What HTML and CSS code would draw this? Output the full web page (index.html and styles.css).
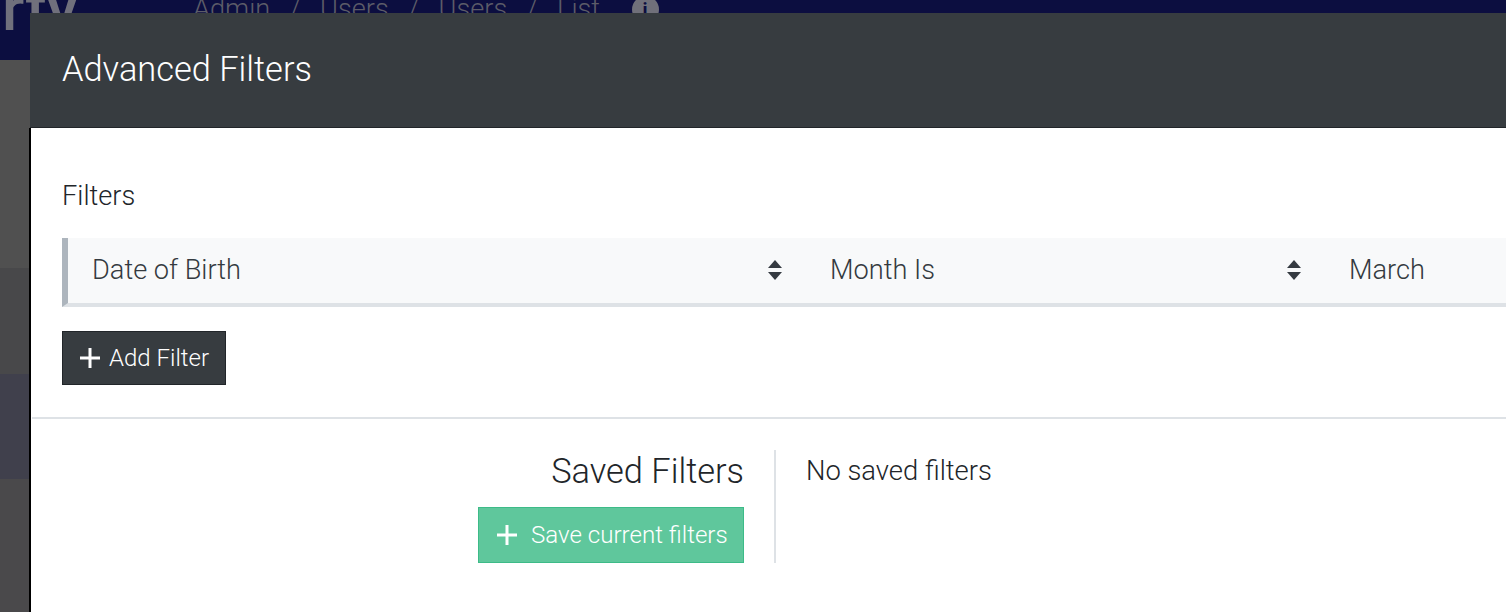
FILE: index.html
```html
<!DOCTYPE html>
<html lang="en">
<head>
<meta charset="utf-8">
<title>Advanced Filters</title>
<link rel="stylesheet" href="styles.css">
</head>
<body>
<div class="backdrop">
  <header class="topbar">
    <span class="logo">rty</span>
    <nav class="crumbs">
      <span>Admin</span><span>/</span><span>Users</span><span>/</span><span>Users</span><span>/</span><span>List</span>
      <span class="info">i</span>
    </nav>
  </header>
  <aside class="rail">
    <div class="rail-a"></div>
    <div class="rail-b"></div>
    <div class="rail-c"></div>
    <div class="rail-d"></div>
  </aside>
</div>
<section class="modal">
  <header class="modal-head"><h1 class="modal-title">Advanced Filters</h1></header>
  <div class="modal-main">
    <div class="modal-body">
      <h2 class="filters-label">Filters</h2>
      <div class="filter-row">
        <div class="cell cell-field"><span>Date of Birth</span>
          <svg class="sort" viewBox="0 0 16 22"><path d="M8 1 15 9H1zM8 21 1 13h14z"/></svg>
        </div>
        <div class="cell cell-op"><span>Month Is</span>
          <svg class="sort" viewBox="0 0 16 22"><path d="M8 1 15 9H1zM8 21 1 13h14z"/></svg>
        </div>
        <div class="cell cell-val"><span>March</span></div>
      </div>
      <button class="btn btn-dark">
        <svg class="plus" viewBox="0 0 20 20"><path d="M10 0v20M0 10h20"/></svg>
        Add Filter
      </button>
    </div>
    <div class="saved">
      <div class="saved-left">
        <h2 class="saved-title">Saved Filters</h2>
        <button class="btn btn-green">
          <svg class="plus" viewBox="0 0 20 20"><path d="M10 0v20M0 10h20"/></svg>
          Save current filters
        </button>
      </div>
      <div class="saved-right">No saved filters</div>
    </div>
  </div>
</section>
</body>
</html>
```
FILE: styles.css
```css
* { box-sizing: border-box; }
html, body { margin: 0; height: 612px; overflow: hidden; }
body {
  position: relative;
  width: 1506px;
  background: #4a4a4c;
  font-family: Roboto, "Liberation Sans", sans-serif;
  font-weight: 300;
  color: #212529;
}
.backdrop { display: flex; flex-direction: column; height: 612px; overflow: hidden; }
.topbar {
  position: relative;
  flex: 0 0 60px;
  background: #0c0e40;
  color: #5c5c68;
  overflow: hidden;
}
.logo {
  position: absolute;
  left: 2px;
  top: -23px;
  font-size: 63px;
  line-height: 63px;
  font-weight: 500;
  color: #70707c;
}
.crumbs {
  position: absolute;
  left: 193px;
  top: -5px;
  display: flex;
  gap: 19.5px;
  align-items: center;
  font-size: 27.2px;
  line-height: 28px;
  white-space: nowrap;
}
.info {
  width: 27px;
  height: 27px;
  margin-left: 12px;
  border-radius: 50%;
  background: #70707a;
  color: #0c0e40;
  font-size: 19px;
  font-weight: 700;
  line-height: 27px;
  text-align: center;
}
.rail { flex: 1; display: flex; flex-direction: column; }
.rail-a { height: 208px; background: #505050; }
.rail-b { height: 106px; background: #48484a; }
.rail-c { height: 105px; background: #40404c; }
.rail-d { flex: 1; background: #4a494b; }
.modal {
  position: absolute;
  left: 30px;
  top: 13px;
  width: 1476px;
  height: 599px;
  background: #fff;
  display: flex;
  flex-direction: column;
}
.modal-head {
  flex: 0 0 115px;
  background: #373c40;
  padding: 0 0 2px 32px;
  display: flex;
  align-items: center;
  border-bottom: 1px solid #212529;
}
.modal-title {
  margin: 0;
  font-size: 34.4px;
  font-weight: 300;
  line-height: 40px;
  color: #fff;
}
.modal-main {
  flex: 1;
  margin-left: -1px;
  border-left: 2px solid #000;
  background: #fff;
}
.modal-body {
  margin-left: 1px;
  padding: 52px 0 32px 30px;
  border-bottom: 2px solid #dee2e6;
}
.filters-label {
  margin: 0 0 26px;
  font-size: 27.2px;
  font-weight: 300;
  line-height: 32px;
  color: #212529;
}
.filter-row {
  display: flex;
  height: 69px;
  background: #f8f9fa;
  border-left: 6px solid #adb5bd;
  border-bottom: 4px solid #dee2e6;
  margin-bottom: 24px;
  font-size: 27.2px;
  color: #343a40;
}
.cell { display: flex; align-items: center; justify-content: space-between; padding-bottom: 2px; }
.cell-field { width: 715px; padding-left: 24px; }
.cell-op { width: 519px; padding-left: 47px; }
.cell-val { flex: 1; padding-left: 47px; }
.sort { width: 16px; height: 22px; fill: #343a40; }
.btn {
  display: flex;
  align-items: center;
  border: 1px solid transparent;
  font-family: inherit;
  font-weight: 300;
  color: #fff;
  padding: 0;
}
.plus { width: 20px; height: 20px; stroke: #fff; stroke-width: 3; fill: none; }
.btn-dark {
  width: 164px;
  height: 54px;
  background: #373c40;
  border-color: #212529;
  padding-left: 17px;
  gap: 9px;
  font-size: 24px;
}
.saved { display: flex; padding-top: 31px; }
.saved-left {
  width: 745px;
  display: flex;
  flex-direction: column;
  align-items: flex-end;
  padding-right: 30px;
  border-right: 2px solid #dee2e6;
}
.saved-title {
  margin: 1px 0 16px;
  font-size: 34.4px;
  font-weight: 300;
  line-height: 40px;
  color: #212529;
}
.btn-green {
  width: 266px;
  height: 56px;
  background: #5fc79c;
  border-color: #3dbb88;
  padding-left: 18px;
  gap: 14px;
  font-size: 24.1px;
}
.saved-right {
  padding: 1px 0 0 30px;
  font-size: 27.4px;
  line-height: 40px;
  color: #212529;
}
```
